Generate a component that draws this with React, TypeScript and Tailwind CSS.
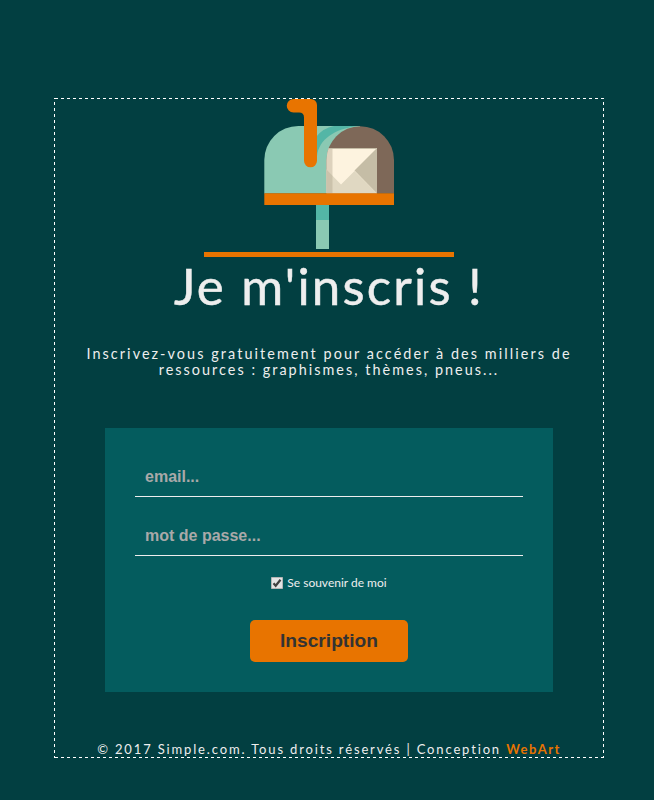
import React from "react";

function Mailbox() {
  return (
    <svg width="130" height="151" viewBox="264 98 130 151" className="block shrink-0" aria-hidden="true">
      <defs>
        <clipPath id="door"><path d="M326.5 193.5V160a33.75 33.75 0 0 1 67.5 0v33.5z" /></clipPath>
      </defs>
      <path d="M264.3 193.5V160a34 34 0 0 1 34-34H360v67.500z" fill="#8ac9b3" />
      <path d="M316 137q7-9 18-11h23c-22 3-38 13-40 30h-1z" fill="#53b6a6" />
      <g clipPath="url(#door)">
        <path d="M326 125h69v69h-69z" fill="#7e6858" />
        <path d="M326 148h51v46h-51z" fill="#fdf3df" />
        <path d="M326 169l15 15.500L354.500 171 377 193.500h-51z" fill="#e0d8c2" />
        <path d="M377 148v45.500L354.500 170.500z" fill="#c5bda6" />
        <path d="M326 148h6.500v45.500H326z" fill="#a99d86" fillOpacity=".38" />
        <path d="M326 148.500h50.500v45" fill="none" stroke="#c5bda6" strokeWidth="1" />
      </g>
      <path d="M264.300 193.300H394v11.700H264.300z" fill="#e87400" />
      <path d="M316 205h13v44h-13z" fill="#8ac9b3" />
      <path d="M316 205h13v15h-13z" fill="#53b6a6" />
      <path d="M293.500 99H311a6 6 0 0 1 6 6v55.800a6.500 6.500 0 0 1-13 0V117.500q0-5-5-5h-5.500a6.750 6.750 0 0 1 0-13.500z" fill="#e87400" />
    </svg>
  );
}

export default function App() {
  return (
    <main className="flex h-[800px] w-[654px] justify-center bg-[#023f41] pt-[98px] pl-1 font-['Lato',sans-serif] text-[#eeeeee]">
      <div className="flex h-[660px] w-[550px] flex-col items-center bg-[repeating-linear-gradient(90deg,transparent_0_1px,#fff_1px_4px,transparent_4px_6px),repeating-linear-gradient(90deg,transparent_0_1px,#fff_1px_4px,transparent_4px_6px),repeating-linear-gradient(180deg,#fff_0_1px,transparent_1px_4px,#fff_4px_6px),repeating-linear-gradient(180deg,#fff_0_1px,transparent_1px_4px,#fff_4px_6px)] bg-[length:100%_1px,100%_1px,1px_100%,1px_100%] bg-[position:0_0,0_100%,0_0,100%_0] bg-no-repeat">
        <Mailbox />
        <div className="mt-[3px] h-[5px] w-[250px] shrink-0 bg-[#e87400]" />
        <h1 className="h-[57px] text-[51px] leading-[57px] tracking-[2.200px] whitespace-nowrap [-webkit-text-stroke:0.5px_#eeeeee]">Je m'inscris !</h1>
        <div className="mt-8 text-center text-[14.400px] leading-4 whitespace-nowrap">
          <p className="tracking-[2.080px]">Inscrivez-vous gratuitement pour accéder à des milliers de</p>
          <p className="tracking-[2.030px]">ressources : graphismes, thèmes, pneus...</p>
        </div>
        <form className="mt-[50px] flex h-[264px] w-[448px] shrink-0 flex-col items-center bg-[#045c5e] px-[30px] pt-[30px]" onSubmit={(e) => e.preventDefault()}>
          <input aria-label="email" placeholder="email..." className="h-[39px] w-full border-b border-[#eeeeee] px-[10px] font-['Liberation_Sans',sans-serif] text-[16px] font-bold outline-none placeholder:text-[#a9a9a9]" />
          <input aria-label="mot de passe" type="password" placeholder="mot de passe..." className="mt-5 h-[39px] w-full border-b border-[#eeeeee] px-[10px] font-['Liberation_Sans',sans-serif] text-[16px] font-bold outline-none placeholder:text-[#a9a9a9]" />
          <label className="mt-[19px] flex h-4 items-center gap-1 text-[12px] whitespace-nowrap">
            <svg width="12" height="12" viewBox="0 0 12 12">
              <path d="M.5.5h11v11H.5z" fill="#e4e4e4" stroke="#b5b5b5" />
              <path d="M2.500 6.200l2.200 2.500 4.800-6" fill="none" stroke="#404040" strokeWidth="2.200" />
            </svg>
            <span>Se souvenir de moi</span>
          </label>
          <button className="mt-[29px] h-[42px] w-[158px] rounded-[5px] bg-[#e87400] font-['Liberation_Sans',sans-serif] text-[19.200px] font-bold text-[#333333]">Inscription</button>
        </form>
        <footer className="mt-[49px] h-4 text-[13px] leading-4 tracking-[1.850px] whitespace-nowrap">
          © 2017 Simple.com. Tous droits réservés | Conception <a className="font-bold tracking-[1.500px] text-[#e87400]">WebArt</a>
        </footer>
      </div>
    </main>
  );
}
